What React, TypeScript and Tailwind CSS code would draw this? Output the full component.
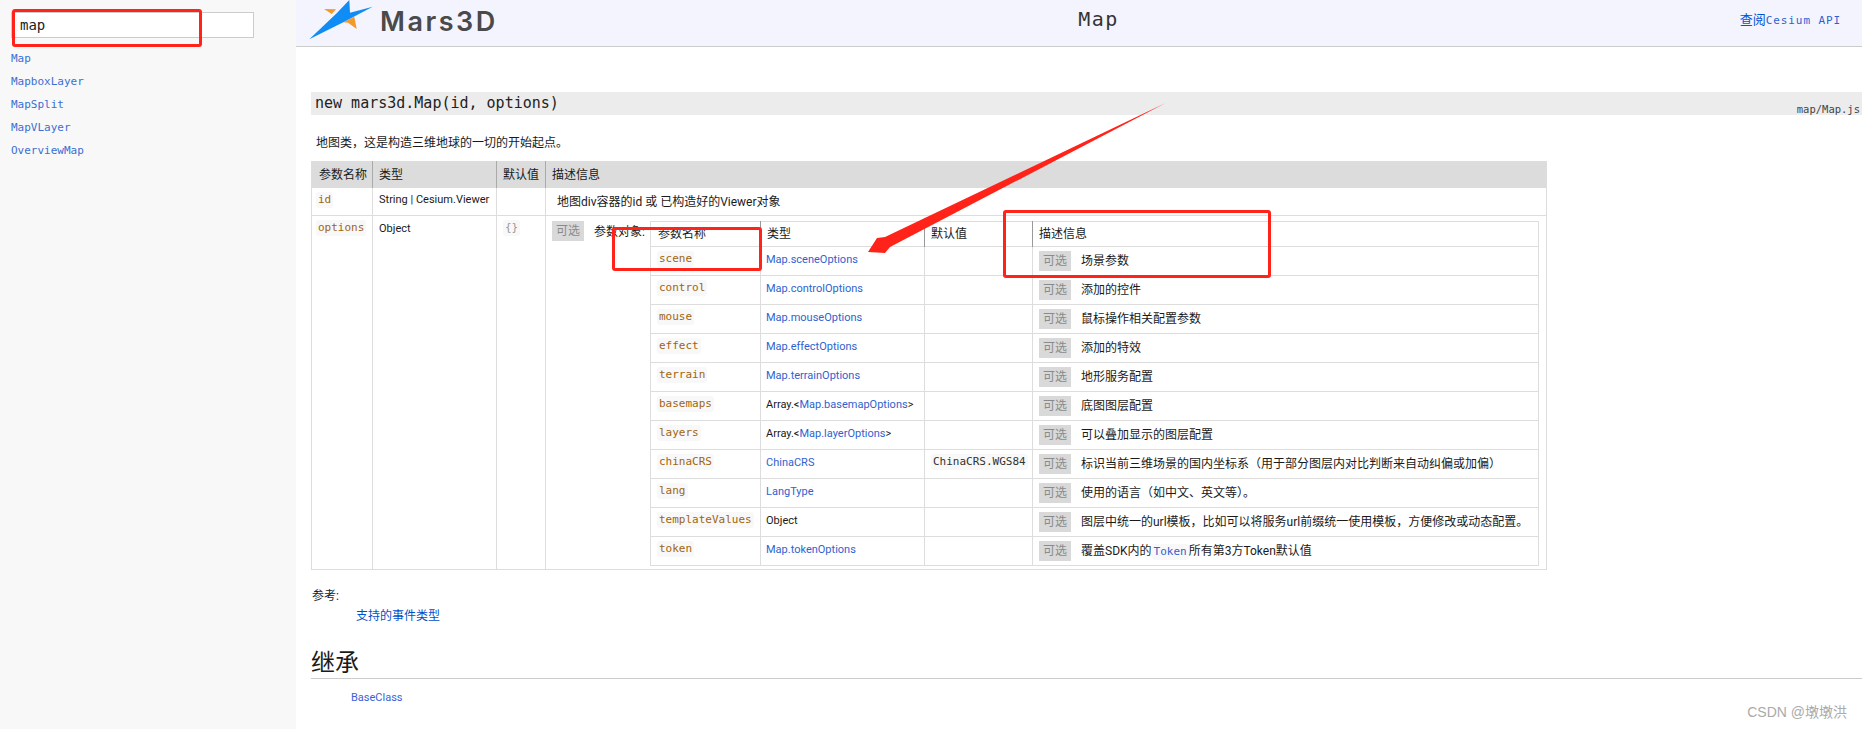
const MONO = "font-['DejaVu_Sans_Mono','Noto_Sans_CJK_SC',monospace]";

function Badge() {
  return (
    <span className="inline-flex h-5 w-8 shrink-0 items-center justify-center bg-[#d9d9d9] text-[12px] text-[#8a8a8a]">
      可选
    </span>
  );
}

function Code({ children, tone = "brown" }: { children: string; tone?: "brown" | "dark" | "gray" | "blue" }) {
  const color =
    tone === "brown"
      ? "text-[#a0640f]"
      : tone === "dark"
        ? "text-[#333]"
        : tone === "blue"
          ? "text-[#2f62cf]"
          : "text-[#999]";
  return (
    <code className={`inline-block h-4 rounded-[3px] bg-[#f8f8f8] px-[2px] font-['DejaVu_Sans_Mono',monospace] text-[11px] leading-4 ${color}`}>
      {children}
    </code>
  );
}

function A({ children }: { children: string }) {
  return <span className="text-[#2f62cf]">{children}</span>;
}

type Row = { name: string; type: React.ReactNode; def?: string; desc: React.ReactNode };

const rows: Row[] = [
  { name: "scene", type: <A>Map.sceneOptions</A>, desc: "场景参数" },
  { name: "control", type: <A>Map.controlOptions</A>, desc: "添加的控件" },
  { name: "mouse", type: <A>Map.mouseOptions</A>, desc: "鼠标操作相关配置参数" },
  { name: "effect", type: <A>Map.effectOptions</A>, desc: "添加的特效" },
  { name: "terrain", type: <A>Map.terrainOptions</A>, desc: "地形服务配置" },
  { name: "basemaps", type: <>Array.&lt;<A>Map.basemapOptions</A>&gt;</>, desc: "底图图层配置" },
  { name: "layers", type: <>Array.&lt;<A>Map.layerOptions</A>&gt;</>, desc: "可以叠加显示的图层配置" },
  { name: "chinaCRS", type: <A>ChinaCRS</A>, def: "ChinaCRS.WGS84", desc: "标识当前三维场景的国内坐标系（用于部分图层内对比判断来自动纠偏或加偏）" },
  { name: "lang", type: <A>LangType</A>, desc: "使用的语言（如中文、英文等）。" },
  { name: "templateValues", type: "Object", desc: "图层中统一的url模板，比如可以将服务url前缀统一使用模板，方便修改或动态配置。" },
  {
    name: "token",
    type: <A>Map.tokenOptions</A>,
    desc: (
      <>
        覆盖SDK内的<Code tone="blue">Token</Code>所有第3方Token默认值
      </>
    ),
  },
];

function InnerTable() {
  return (
    <table className="ml-1 w-[889px] table-fixed border-collapse border border-[#ddd] text-[11px] text-[#1a1a1a]">
      <colgroup>
        <col className="w-[110px]" />
        <col className="w-[164px]" />
        <col className="w-[108px]" />
        <col />
      </colgroup>
      <thead>
        <tr className="h-[25px] border-b border-[#ddd] text-left text-[12px] font-normal">
          <th className="border-r border-[#999] pl-[7px] font-normal">参数名称</th>
          <th className="border-r border-[#999] pl-[6px] font-normal">类型</th>
          <th className="border-r border-[#999] pl-[6px] font-normal">默认值</th>
          <th className="pl-[6px] font-normal">描述信息</th>
        </tr>
      </thead>
      <tbody>
        {rows.map((r) => (
          <tr key={r.name} className="h-[29px] border-b border-[#ddd]">
            <td className="border-r border-[#ddd] pl-[6px] align-top pt-1">
              <Code>{r.name}</Code>
            </td>
            <td className="whitespace-nowrap border-r border-[#ddd] pl-[5px] align-top pt-[5px] leading-4">{r.type}</td>
            <td className="border-r border-[#ddd] pl-[6px] align-top pt-1">
              {r.def ? <Code tone="dark">{r.def}</Code> : null}
            </td>
            <td className="pl-[6px] align-top pt-[4px]">
              <div className="flex items-center">
                <Badge />
                <span className="ml-[10px] whitespace-nowrap text-[12px] text-[#1a1a1a]">{r.desc}</span>
              </div>
            </td>
          </tr>
        ))}
      </tbody>
    </table>
  );
}

function Logo() {
  return (
    <svg width="66" height="42" viewBox="0 0 66 42" className="shrink-0">
      <path d="M16 9 L28 9.3 L23.7 14 Z" fill="#f39a2d" />
      <path d="M35.3 22.3 L46.3 16.7 L48.7 29 L40 22.7 Z" fill="#f39a2d" />
      <path d="M1.3 39.3 L28.7 13.3 L41.3 0 L42 12.7 L64.7 6.7 L35.3 22.3 Z" fill="#0f8cf5" />
    </svg>
  );
}

function Box({ className }: { className: string }) {
  return <div className={`absolute rounded-[3px] border-[3px] border-[#ff2319] ${className}`} />;
}

export default function App() {
  return (
    <div className="relative flex h-[729px] w-[1862px] overflow-hidden bg-white font-['Roboto','Noto_Sans_CJK_SC',sans-serif] text-[12px] text-[#1a1a1a]">
      <aside className={`w-[296px] shrink-0 bg-[#f8f8f8] pl-[11px] pt-3 ${MONO}`}>
        <div className="flex h-[26px] w-[243px] items-center border border-[#ccc] bg-white pl-2 text-[14px] text-[#222]">
          map
        </div>
        <ul className="mt-[9px] flex flex-col text-[11px] text-[#3b6fd4]">
          {["Map", "MapboxLayer", "MapSplit", "MapVLayer", "OverviewMap"].map((n) => (
            <li key={n} className="h-[23px] leading-[23px]">
              {n}
            </li>
          ))}
        </ul>
      </aside>

      <main className="flex min-w-0 flex-1 flex-col">
        <header className="grid h-[47px] shrink-0 grid-cols-[1fr_auto_1fr] items-center border-b border-[#ccc] bg-[#f3f4fd] pl-3 pr-[21px]">
          <div className="flex items-center gap-[6px] pb-[5px]">
            <Logo />
            <span className="font-['Inter',sans-serif] text-[27px] font-semibold leading-none tracking-[2.5px] text-[#4a4a4a]">
              Mars3D
            </span>
          </div>
          <div className={`${MONO} pb-[10px] pl-[48px] text-[20px] tracking-[1.5px] text-[#333]`}>Map</div>
          <div className={`${MONO} justify-self-end pb-[8px] text-[11px] tracking-[0.9px] text-[#2f62cf]`}>
            <span className="text-[13px] tracking-normal text-[#0053d9]">查阅</span>Cesium API
          </div>
        </header>

        <section className="pl-[15px]">
          <div className={`mt-[45px] flex h-[23px] items-center bg-[#ececec] pl-1 ${MONO} text-[15px] text-[#222]`}>
            new mars3d.Map(id, options)
          </div>
          <div className={`-mt-[11px] h-[11px] pr-[2px] text-right ${MONO} text-[10.5px] leading-[11px] text-[#444]`}>
            map/Map.js
          </div>

          <p className="mt-[19px] pl-[5px] text-[12px] leading-[18px]">
            地图类，这是构造三维地球的一切的开始起点。
          </p>

          <table className="mt-[9px] w-[1236px] table-fixed border-collapse border border-[#ddd] text-[11px] text-[#1a1a1a]">
            <colgroup>
              <col className="w-[61px]" />
              <col className="w-[124px]" />
              <col className="w-[49px]" />
              <col />
            </colgroup>
            <thead>
              <tr className="h-[26px] bg-[#dcdcdc] text-left text-[12px]">
                <th className="border-r border-[#aaa] pl-[7px] font-normal">参数名称</th>
                <th className="border-r border-[#aaa] pl-[6px] font-normal">类型</th>
                <th className="border-r border-[#aaa] pl-[6px] font-normal">默认值</th>
                <th className="pl-[6px] font-normal">描述信息</th>
              </tr>
            </thead>
            <tbody>
              <tr className="h-[28px] border-b border-[#ddd]">
                <td className="border-r border-[#ddd] pl-[4px] align-top pt-1">
                  <Code>id</Code>
                </td>
                <td className="whitespace-nowrap border-r border-[#ddd] pl-[6px] align-top pt-[4px]">String | Cesium.Viewer</td>
                <td className="border-r border-[#ddd]" />
                <td className="pl-[11px] align-top pt-[5px] text-[12px]">地图div容器的id 或 已构造好的Viewer对象</td>
              </tr>
              <tr className="h-[354px]">
                <td className="border-r border-[#ddd] pl-[4px] align-top pt-[4px]">
                  <Code>options</Code>
                </td>
                <td className="border-r border-[#ddd] pl-[6px] align-top pt-[5px]">Object</td>
                <td className="border-r border-[#ddd] pl-[6px] align-top pt-[4px]">
                  <Code tone="gray">{"{}"}</Code>
                </td>
                <td className="pl-[6px] align-top pt-[5px]">
                  <div className="flex items-start">
                    <Badge />
                    <span className="ml-[10px] mt-[2px] w-[52px] shrink-0 whitespace-nowrap text-[12px]">参数对象:</span>
                    <InnerTable />
                  </div>
                </td>
              </tr>
            </tbody>
          </table>

          <div className="mt-[17px] pl-px text-[12px] leading-[18px]">参考:</div>
          <div className="mt-[2px] pl-[45px] text-[12px] leading-[18px] text-[#0050c8]">支持的事件类型</div>
          <h2 className="mt-[23px] h-[31px] border-b border-[#ccc] text-[24px] font-normal leading-[30px] text-[#1a1a1a]">
            继承
          </h2>
          <div className="mt-[10px] pl-10 text-[11px] leading-[18px] text-[#3b5fd9]">BaseClass</div>
        </section>
      </main>

      <Box className="left-[12px] top-[9px] h-[38px] w-[190px]" />
      <Box className="left-[612px] top-[227px] h-[44px] w-[150px]" />
      <Box className="left-[1003px] top-[210px] h-[68px] w-[268px]" />
      <svg width="1862" height="729" className="pointer-events-none absolute left-0 top-0">
        <polygon points="1165.6,103 885,237 877,238 868,252 885,253 890,247" fill="#ff2319" />
      </svg>
      <div className="absolute right-[15px] top-[702px] font-['Liberation_Sans','Noto_Sans_CJK_SC',sans-serif] text-[14px] text-[#aaa]">
        CSDN @墩墩洪
      </div>
    </div>
  );
}
